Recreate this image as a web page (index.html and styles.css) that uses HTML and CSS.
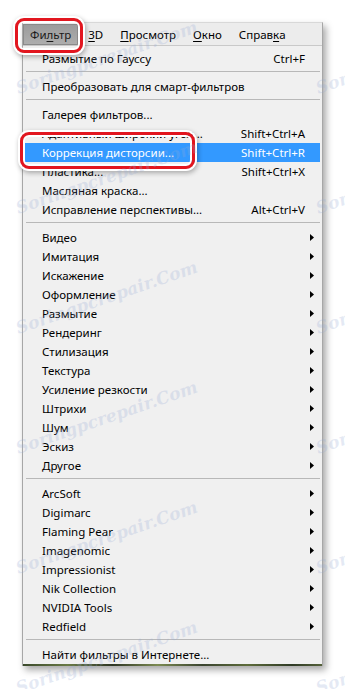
FILE: index.html
```html
<!DOCTYPE html>
<html lang="ru">
<head>
<meta charset="utf-8">
<link rel="stylesheet" href="styles.css">
</head>
<body>
<div class="page">
  <div class="menu">
    <div class="bar">
      <span class="mi active">Фи<u>л</u>ьтр</span>
      <span class="mi"><u>3</u>D</span>
      <span class="mi"><u>П</u>росмотр</span>
      <span class="mi"><u>О</u>кно</span>
      <span class="mi">Справ<u>к</u>а</span>
    </div>
    <div class="list">
      <div class="row"><span class="label">Размытие по Гауссу</span><span class="key">Ctrl+F</span><span class="sub"></span></div>
      <div class="sep"></div>
      <div class="row"><span class="label">Преобразовать для смарт-фильтров</span><span class="key"></span><span class="sub"></span></div>
      <div class="sep"></div>
      <div class="row"><span class="label">Галерея фильтров...</span><span class="key"></span><span class="sub"></span></div>
      <div class="row"><span class="label">Адаптивный широкий угол...</span><span class="key">Shift+Ctrl+A</span><span class="sub"></span></div>
      <div class="row hl"><span class="label">Коррекция дисторсии...</span><span class="key">Shift+Ctrl+R</span><span class="sub"></span></div>
      <div class="row"><span class="label">Пластика...</span><span class="key">Shift+Ctrl+X</span><span class="sub"></span></div>
      <div class="row"><span class="label">Масляная краска...</span><span class="key"></span><span class="sub"></span></div>
      <div class="row"><span class="label">Исправление перспективы...</span><span class="key">Alt+Ctrl+V</span><span class="sub"></span></div>
      <div class="sep"></div>
      <div class="row"><span class="label">Видео</span><span class="key"></span><span class="sub"><svg viewBox="0 0 4 7" class="arr"><path d="M0 0L4 3.5L0 7Z"/></svg></span></div>
      <div class="row"><span class="label">Имитация</span><span class="key"></span><span class="sub"><svg viewBox="0 0 4 7" class="arr"><path d="M0 0L4 3.5L0 7Z"/></svg></span></div>
      <div class="row"><span class="label">Искажение</span><span class="key"></span><span class="sub"><svg viewBox="0 0 4 7" class="arr"><path d="M0 0L4 3.5L0 7Z"/></svg></span></div>
      <div class="row"><span class="label">Оформление</span><span class="key"></span><span class="sub"><svg viewBox="0 0 4 7" class="arr"><path d="M0 0L4 3.5L0 7Z"/></svg></span></div>
      <div class="row"><span class="label">Размытие</span><span class="key"></span><span class="sub"><svg viewBox="0 0 4 7" class="arr"><path d="M0 0L4 3.5L0 7Z"/></svg></span></div>
      <div class="row"><span class="label">Рендеринг</span><span class="key"></span><span class="sub"><svg viewBox="0 0 4 7" class="arr"><path d="M0 0L4 3.5L0 7Z"/></svg></span></div>
      <div class="row"><span class="label">Стилизация</span><span class="key"></span><span class="sub"><svg viewBox="0 0 4 7" class="arr"><path d="M0 0L4 3.5L0 7Z"/></svg></span></div>
      <div class="row"><span class="label">Текстура</span><span class="key"></span><span class="sub"><svg viewBox="0 0 4 7" class="arr"><path d="M0 0L4 3.5L0 7Z"/></svg></span></div>
      <div class="row"><span class="label">Усиление резкости</span><span class="key"></span><span class="sub"><svg viewBox="0 0 4 7" class="arr"><path d="M0 0L4 3.5L0 7Z"/></svg></span></div>
      <div class="row"><span class="label">Штрихи</span><span class="key"></span><span class="sub"><svg viewBox="0 0 4 7" class="arr"><path d="M0 0L4 3.5L0 7Z"/></svg></span></div>
      <div class="row"><span class="label">Шум</span><span class="key"></span><span class="sub"><svg viewBox="0 0 4 7" class="arr"><path d="M0 0L4 3.5L0 7Z"/></svg></span></div>
      <div class="row"><span class="label">Эскиз</span><span class="key"></span><span class="sub"><svg viewBox="0 0 4 7" class="arr"><path d="M0 0L4 3.5L0 7Z"/></svg></span></div>
      <div class="row"><span class="label">Другое</span><span class="key"></span><span class="sub"><svg viewBox="0 0 4 7" class="arr"><path d="M0 0L4 3.5L0 7Z"/></svg></span></div>
      <div class="sep"></div>
      <div class="row"><span class="label">ArcSoft</span><span class="key"></span><span class="sub"><svg viewBox="0 0 4 7" class="arr"><path d="M0 0L4 3.5L0 7Z"/></svg></span></div>
      <div class="row"><span class="label">Digimarc</span><span class="key"></span><span class="sub"><svg viewBox="0 0 4 7" class="arr"><path d="M0 0L4 3.5L0 7Z"/></svg></span></div>
      <div class="row"><span class="label">Flaming Pear</span><span class="key"></span><span class="sub"><svg viewBox="0 0 4 7" class="arr"><path d="M0 0L4 3.5L0 7Z"/></svg></span></div>
      <div class="row"><span class="label">Imagenomic</span><span class="key"></span><span class="sub"><svg viewBox="0 0 4 7" class="arr"><path d="M0 0L4 3.5L0 7Z"/></svg></span></div>
      <div class="row"><span class="label">Impressionist</span><span class="key"></span><span class="sub"><svg viewBox="0 0 4 7" class="arr"><path d="M0 0L4 3.5L0 7Z"/></svg></span></div>
      <div class="row"><span class="label">Nik Collection</span><span class="key"></span><span class="sub"><svg viewBox="0 0 4 7" class="arr"><path d="M0 0L4 3.5L0 7Z"/></svg></span></div>
      <div class="row"><span class="label">NVIDIA Tools</span><span class="key"></span><span class="sub"><svg viewBox="0 0 4 7" class="arr"><path d="M0 0L4 3.5L0 7Z"/></svg></span></div>
      <div class="row"><span class="label">Redfield</span><span class="key"></span><span class="sub"><svg viewBox="0 0 4 7" class="arr"><path d="M0 0L4 3.5L0 7Z"/></svg></span></div>
      <div class="sep"></div>
      <div class="row"><span class="label">Найти фильтры в Интернете...</span><span class="key"></span><span class="sub"></span></div>
    </div>
    <div class="strip"></div>
  </div>

  <div class="ring ring-filter"></div>
  <div class="ring ring-item"></div>

  <div class="wm">
    <div class="wm-grid">
      <span>Soringpcrepair.Com</span><span>Soringpcrepair.Com</span>
      <span>Soringpcrepair.Com</span><span>Soringpcrepair.Com</span>
      <span>Soringpcrepair.Com</span><span>Soringpcrepair.Com</span>
      <span>Soringpcrepair.Com</span><span>Soringpcrepair.Com</span>
      <span>Soringpcrepair.Com</span><span>Soringpcrepair.Com</span>
      <span>Soringpcrepair.Com</span><span>Soringpcrepair.Com</span>
    </div>
  </div>
</div>
</body>
</html>
```

FILE: styles.css
```css
html, body {
  margin: 0;
  padding: 0;
  background: #ffffff;
  overflow: hidden;
}

.page {
  position: relative;
  width: 345px;
  height: 689px;
  padding: 22px 0 0 22px;
  box-sizing: border-box;
  overflow: hidden;
  font-family: "Noto Sans", "Open Sans", sans-serif;
  font-size: 11.5px;
  color: #000;
}

.menu {
  width: 301px;
  background: #f0f0f0;
  border: 1px solid #a7a7a7;
  border-top-color: #d8d8d8;
  border-bottom: none;
  box-sizing: border-box;
  box-shadow: 3px 4px 7px rgba(0, 0, 0, 0.35);
}

.bar {
  display: flex;
  gap: 3px;
  height: 23px;
  background: #ececec;
  border-bottom: 1px solid #c9c9c9;
  box-sizing: border-box;
  align-items: stretch;
  padding-top: 1px;
}

.mi {
  display: flex;
  align-items: center;
  padding: 0 7px;
  line-height: 1;
}

.mi u {
  text-decoration-thickness: 1px;
  text-underline-offset: 2px;
}

.mi.active {
  background: linear-gradient(#9b9b9b, #aeaeae);
  box-shadow: inset 0 0 0 1px #8a8a8a;
  color: #1a1a1a;
}

.list {
  padding: 2.5px 0 0.5px 0;
}

.row {
  display: grid;
  grid-template-columns: 1fr auto 15px;
  align-items: center;
  height: 19px;
  margin: 0 2px 0 1px;
  padding-left: 18px;
  white-space: nowrap;
}

.row.hl {
  background: #3399ff;
  color: #ffffff;
}

.key {
  text-align: right;
}

.sub {
  display: flex;
  align-items: center;
  padding-left: 5px;
}

.arr {
  width: 4px;
  height: 7px;
  fill: #000;
}

.sep {
  height: 1px;
  margin: 3px 2px 5px 3px;
  background: #b8b8b8;
}

.strip {
  height: 2px;
  background: linear-gradient(90deg, #3b4a2c, #6a7a45 15%, #2e3625 30%, #7c8a52 45%, #3a4430 60%, #5d6b3a 75%, #2f3a26 90%, #55623a);
}

.ring {
  position: absolute;
  border: 3px solid #e2161f;
  border-radius: 9px;
  box-sizing: border-box;
  box-shadow: 0 0 0 2px #ffffff, inset 0 0 0 2px #ffffff, 1px 2px 5px 2px rgba(0, 0, 0, 0.3);
}

.ring-filter {
  left: 15px;
  top: 18px;
  width: 68px;
  height: 35px;
}

.ring-item {
  left: 20px;
  top: 132px;
  width: 175px;
  height: 37px;
}

.wm {
  position: absolute;
  inset: 0;
  overflow: hidden;
  pointer-events: none;
}

.wm-grid {
  display: grid;
  grid-template-columns: 300px 300px;
  grid-auto-rows: 120px;
  padding: 78px 0 0 18px;
}

.wm span {
  display: block;
  font-family: "DejaVu Serif", serif;
  font-style: italic;
  font-weight: bold;
  font-size: 17px;
  line-height: 20px;
  height: 20px;
  white-space: nowrap;
  color: rgba(150, 170, 212, 0.25);
  transform-origin: 0 75%;
  transform: rotate(-19deg);
}
```
